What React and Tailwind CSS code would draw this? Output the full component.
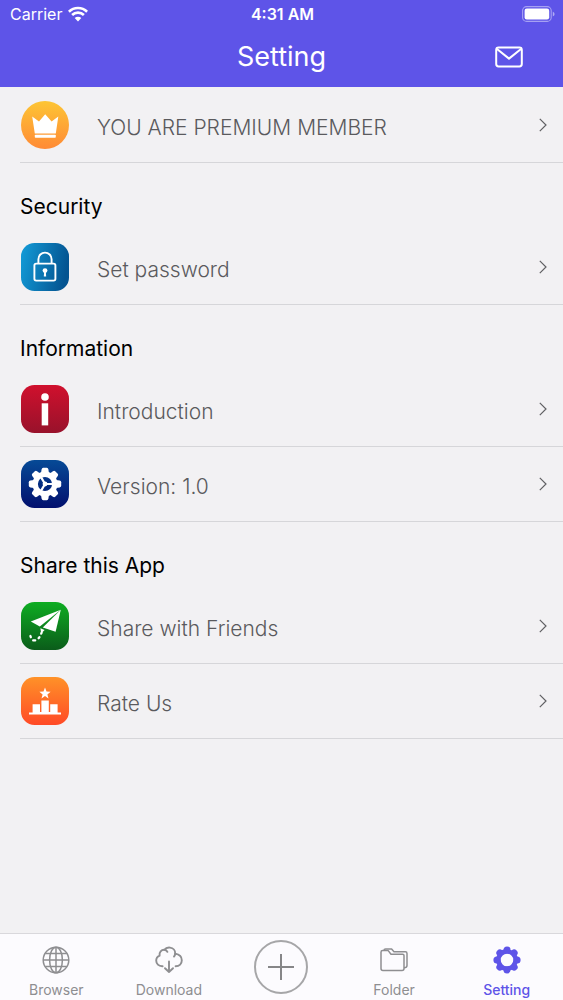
import React from "react";

function CrownIcon() {
  return (
    <svg viewBox="0 0 48 48" className="size-12 shrink-0" aria-hidden="true">
      <defs>
        <linearGradient id="crown" x1="0" y1="0" x2="0" y2="1">
          <stop offset="0" stopColor="#fdc534" />
          <stop offset="1" stopColor="#ff8a35" />
        </linearGradient>
      </defs>
      <circle cx="24" cy="24" r="24" fill="url(#crown)" />
      <path d="M11.2 15.6 L18 20.6 L24.2 13.2 L30.6 20.6 L37.3 15.6 L34.8 32.4 H13.8 Z" fill="#fff" />
      <rect x="13.8" y="33.8" width="21" height="3" rx="0.8" fill="#fff" />
    </svg>
  );
}

function LockIcon() {
  return (
    <svg viewBox="0 0 48 48" className="size-12 shrink-0" aria-hidden="true">
      <defs>
        <linearGradient id="lock" x1="0" y1="0.1" x2="1" y2="0.3">
          <stop offset="0" stopColor="#139bd7" />
          <stop offset="1" stopColor="#045491" />
        </linearGradient>
      </defs>
      <rect width="48" height="48" rx="13.5" fill="url(#lock)" />
      <g fill="none" stroke="#fff" strokeWidth="1.9">
        <rect x="13.4" y="20.6" width="21" height="17" rx="1.8" />
        <path d="M17.4 20.6 V16.2 a6.6 6.6 0 0 1 13.2 0 V20.6" />
      </g>
      <circle cx="24" cy="27.6" r="2.4" fill="#fff" />
      <path d="M23.2 28 H24.8 L25.2 33.6 H22.8 Z" fill="#fff" />
    </svg>
  );
}

function InfoIcon() {
  return (
    <svg viewBox="0 0 48 48" className="size-12 shrink-0" aria-hidden="true">
      <defs>
        <linearGradient id="info" x1="0" y1="0" x2="0" y2="1">
          <stop offset="0" stopColor="#d0102d" />
          <stop offset="1" stopColor="#98122b" />
        </linearGradient>
      </defs>
      <rect width="48" height="48" rx="13.5" fill="url(#info)" />
      <circle cx="24" cy="12" r="3.8" fill="#fff" />
      <rect x="20.7" y="18.3" width="6.5" height="22.1" fill="#fff" />
    </svg>
  );
}

const EIGHTHS = [0, 45, 90, 135, 180, 225, 270, 315];

function VersionIcon() {
  return (
    <svg viewBox="0 0 48 48" className="size-12 shrink-0" aria-hidden="true">
      <defs>
        <linearGradient id="version" x1="0" y1="0" x2="0" y2="1">
          <stop offset="0" stopColor="#064a96" />
          <stop offset="1" stopColor="#02106e" />
        </linearGradient>
      </defs>
      <rect width="48" height="48" rx="13.5" fill="url(#version)" />
      {EIGHTHS.map((a) => (
        <path
          key={a}
          d="M20 13 L20.6 9.4 Q20.9 7.8 22.2 7.8 H25.8 Q27.1 7.8 27.4 9.4 L28 13 Z"
          fill="#fff"
          transform={`rotate(${a} 24 24)`}
        />
      ))}
      <circle cx="24" cy="24" r="9.8" fill="none" stroke="#fff" strokeWidth="5.4" />
      <circle cx="24" cy="24" r="2.4" fill="#fff" />
      <path d="M24 24 L19.6 16.4 M24 24 L19.6 31.6 M24 24 H32.5" stroke="#fff" strokeWidth="2.2" />
    </svg>
  );
}

function ShareIcon() {
  return (
    <svg viewBox="0 0 48 48" className="size-12 shrink-0" aria-hidden="true">
      <defs>
        <linearGradient id="share" x1="0" y1="0" x2="0" y2="1">
          <stop offset="0" stopColor="#0ead22" />
          <stop offset="1" stopColor="#0b5c1a" />
        </linearGradient>
      </defs>
      <rect width="48" height="48" rx="13.5" fill="url(#share)" />
      <path d="M39.8 7.8 L9.8 19.6 L18.8 24.4 Z" fill="#fff" />
      <path d="M39.8 7.8 L21.8 25.4 L34.6 29.8 Z" fill="#fff" />
      <path d="M19.4 26.2 L20.2 31.4 L23.6 28 Z" fill="#fff" />
      <g fill="none" stroke="#fff" strokeWidth="2.3" strokeLinecap="round">
        <path d="M20.6 30.6 L20.2 31.6" />
        <path d="M18.4 35.2 L17.6 36.2" />
        <path d="M12.2 38.4 L14.2 38.4" />
        <path d="M9.4 34 L9.8 35.2" />
      </g>
    </svg>
  );
}

function RateIcon() {
  return (
    <svg viewBox="0 0 48 48" className="size-12 shrink-0" aria-hidden="true">
      <defs>
        <linearGradient id="rate" x1="0" y1="0" x2="0" y2="1">
          <stop offset="0" stopColor="#ff9228" />
          <stop offset="1" stopColor="#ff4a26" />
        </linearGradient>
      </defs>
      <rect width="48" height="48" rx="13.5" fill="url(#rate)" />
      <path
        d="M24 10.6 L25.5 14.5 L29.6 14.8 L26.4 17.4 L27.5 21.4 L24 19.1 L20.5 21.4 L21.6 17.4 L18.4 14.8 L22.5 14.5 Z"
        fill="#fff"
      />
      <path d="M8 35.6 H11.6 V27.2 H19 V35 H20.4 V23.4 H27.8 V35 H29.2 V27.2 H36.6 V35.6 H40 V37.4 H8 Z" fill="#fff" />
    </svg>
  );
}

function Chevron() {
  return (
    <svg viewBox="0 0 8 14" className="h-3.5 w-2 shrink-0" fill="none" stroke="#606063" strokeWidth="1.2" aria-hidden="true">
      <path d="M0.8 0.8 L7 7 L0.8 13.2" />
    </svg>
  );
}

function GlobeIcon() {
  return (
    <svg viewBox="0 0 28 28" className="size-7" fill="none" stroke="currentColor" strokeWidth="1.5" aria-hidden="true">
      <circle cx="14" cy="14" r="12.8" />
      <ellipse cx="14" cy="14" rx="6.4" ry="12.8" />
      <path d="M14 1.2 V26.8 M1.2 14 H26.8 M3.2 7.4 H24.8 M3.2 20.6 H24.8" />
    </svg>
  );
}

function CloudIcon() {
  return (
    <svg
      viewBox="0 0 28 28"
      className="size-7"
      fill="none"
      stroke="currentColor"
      strokeWidth="1.9"
      strokeLinecap="round"
      strokeLinejoin="round"
      aria-hidden="true"
    >
      <path d="M7.6 20.2 C3.6 20.4 1.2 17.8 1.2 14.6 C1.2 12.4 2.6 10.4 4.6 9.6 C4 6.2 6.4 3.6 9.4 3.8 C10.8 1.8 13 1.4 15 1.6 C18.2 2 20.4 4.4 20.2 7.6 C23.8 8.2 26.8 10.6 26.8 14.2 C26.8 17.6 24.4 20.2 20.6 20.2" />
      <path d="M9.4 3.8 C10.6 3.9 11.8 4.6 12.4 5.8 M20.2 7.6 C20.1 8.8 19.7 9.8 19 10.6" />
      <path d="M14 15.4 V26 M10 22.2 L14 26 L18 22.2" />
    </svg>
  );
}

function FolderIcon() {
  return (
    <svg
      viewBox="0 0 28 28"
      className="size-7"
      fill="none"
      stroke="currentColor"
      strokeWidth="1.5"
      strokeLinejoin="round"
      aria-hidden="true"
    >
      <path d="M1 6.2 Q1 4.6 2.6 4.6 H8.2 L11 8.2 H22.6 Q24 8.2 24 9.6 V22.6 Q24 24.6 22 24.6 H3 Q1 24.6 1 22.6 Z" />
      <path d="M4 4.6 Q4 3 5.6 3 H11.6 L14 5.8 H25.4 Q27 5.8 27 7.4 V19.4 Q27 21.6 24 21.8" />
    </svg>
  );
}

function GearIcon() {
  return (
    <svg viewBox="0 0 28 28" className="size-7" fill="currentColor" aria-hidden="true">
      {EIGHTHS.map((a) => (
        <circle key={a} cx="14" cy="3.9" r="3.5" transform={`rotate(${a} 14 14)`} />
      ))}
      <circle cx="14" cy="14" r="8.6" fill="none" stroke="currentColor" strokeWidth="4.6" />
    </svg>
  );
}

function Row({ icon, label }) {
  return (
    <li>
      <button type="button" className="flex w-full cursor-pointer text-left">
        <span className="ml-5 flex h-[75px] flex-1 items-center border-b border-[#d6d6d9] pr-4 pl-px">
          {icon}
          <span className="ml-7 flex-1 pt-1.5 text-[21px] leading-7 font-light text-[#5a5a5d]">{label}</span>
          <Chevron />
        </span>
      </button>
    </li>
  );
}

function Section({ title, children }) {
  return (
    <section>
      <h2 className="flex h-[67px] items-center pt-5 pl-5 text-[21px] leading-7 text-black">{title}</h2>
      <ul>{children}</ul>
    </section>
  );
}

function Tab({ icon, label, active }) {
  return (
    <a
      href="#"
      aria-current={active ? "page" : undefined}
      className={
        "flex flex-1 flex-col items-center gap-1.5 pt-3 text-sm leading-5 " +
        (active ? "font-medium text-[#5e54e8]" : "text-[#8e8e91]")
      }
    >
      {icon}
      {label}
    </a>
  );
}

export default function App() {
  return (
    <div className="flex min-h-screen flex-col bg-[#f2f1f3] font-['Inter',sans-serif]">
      <header className="bg-[#5e54e8] text-white">
        <div className="grid h-7 grid-cols-3 items-center pr-2 pl-2.5 text-base leading-5">
          <div className="flex items-center gap-1.5">
            Carrier
            <svg viewBox="0 0 20 15" className="h-4 w-5" aria-hidden="true">
              <g fill="none" stroke="#fff" strokeWidth="2.6">
                <path d="M0.9 5.2 A13 13 0 0 1 19.1 5.2" />
                <path d="M4.1 8.5 A8.4 8.4 0 0 1 15.9 8.5" />
              </g>
              <path d="M10 15 L6.7 11.6 A4.7 4.7 0 0 1 13.3 11.6 Z" fill="#fff" />
            </svg>
          </div>
          <div className="text-center font-semibold">4:31 AM</div>
          <svg viewBox="0 0 33 16" className="h-4 w-[33px] justify-self-end" aria-label="Battery full" role="img">
            <rect x="0.6" y="0.6" width="28.6" height="14.8" rx="4" fill="none" stroke="#fff" strokeOpacity="0.45" strokeWidth="1.1" />
            <rect x="2.6" y="2.6" width="24.6" height="10.8" rx="2.2" fill="#fff" />
            <path d="M30.8 5.4 Q32.6 6.4 32.6 8 Q32.6 9.6 30.8 10.6 Z" fill="#fff" fillOpacity="0.5" />
          </svg>
        </div>
        <div className="grid h-[59px] grid-cols-3 items-center pr-10 pb-0.5">
          <h1 className="col-start-2 pl-10 text-center text-[27px] leading-8">Setting</h1>
          <button type="button" aria-label="Messages" className="cursor-pointer justify-self-end">
            <svg viewBox="0 0 28 22" className="h-[22px] w-7" fill="none" stroke="#fff" strokeWidth="2" strokeLinejoin="round" aria-hidden="true">
              <rect x="1.2" y="1.6" width="25.6" height="18.8" rx="2.4" />
              <path d="M2 3 L14 12.6 L26 3" />
            </svg>
          </button>
        </div>
      </header>

      <main className="flex-1 pt-px">
        <ul>
          <Row icon={<CrownIcon />} label="YOU ARE PREMIUM MEMBER" />
        </ul>
        <Section title="Security">
          <Row icon={<LockIcon />} label="Set password" />
        </Section>
        <Section title="Information">
          <Row icon={<InfoIcon />} label="Introduction" />
          <Row icon={<VersionIcon />} label="Version: 1.0" />
        </Section>
        <Section title="Share this App">
          <Row icon={<ShareIcon />} label="Share with Friends" />
          <Row icon={<RateIcon />} label="Rate Us" />
        </Section>
      </main>

      <nav className="flex h-[67px] border-t border-[#d9d8dc] bg-[#fcfbfe]">
        <Tab icon={<GlobeIcon />} label="Browser" />
        <Tab icon={<CloudIcon />} label="Download" />
        <div className="flex flex-1 items-center justify-center">
          <button type="button" aria-label="Add" className="cursor-pointer">
            <svg viewBox="0 0 54 54" className="size-[54px]" fill="none" aria-hidden="true">
              <circle cx="27" cy="27" r="26" stroke="#a6a6a8" strokeWidth="2" />
              <path d="M27 14 V40 M14 27 H40" stroke="#868688" strokeWidth="2" />
            </svg>
          </button>
        </div>
        <Tab icon={<FolderIcon />} label="Folder" />
        <Tab icon={<GearIcon />} label="Setting" active />
      </nav>
    </div>
  );
}
